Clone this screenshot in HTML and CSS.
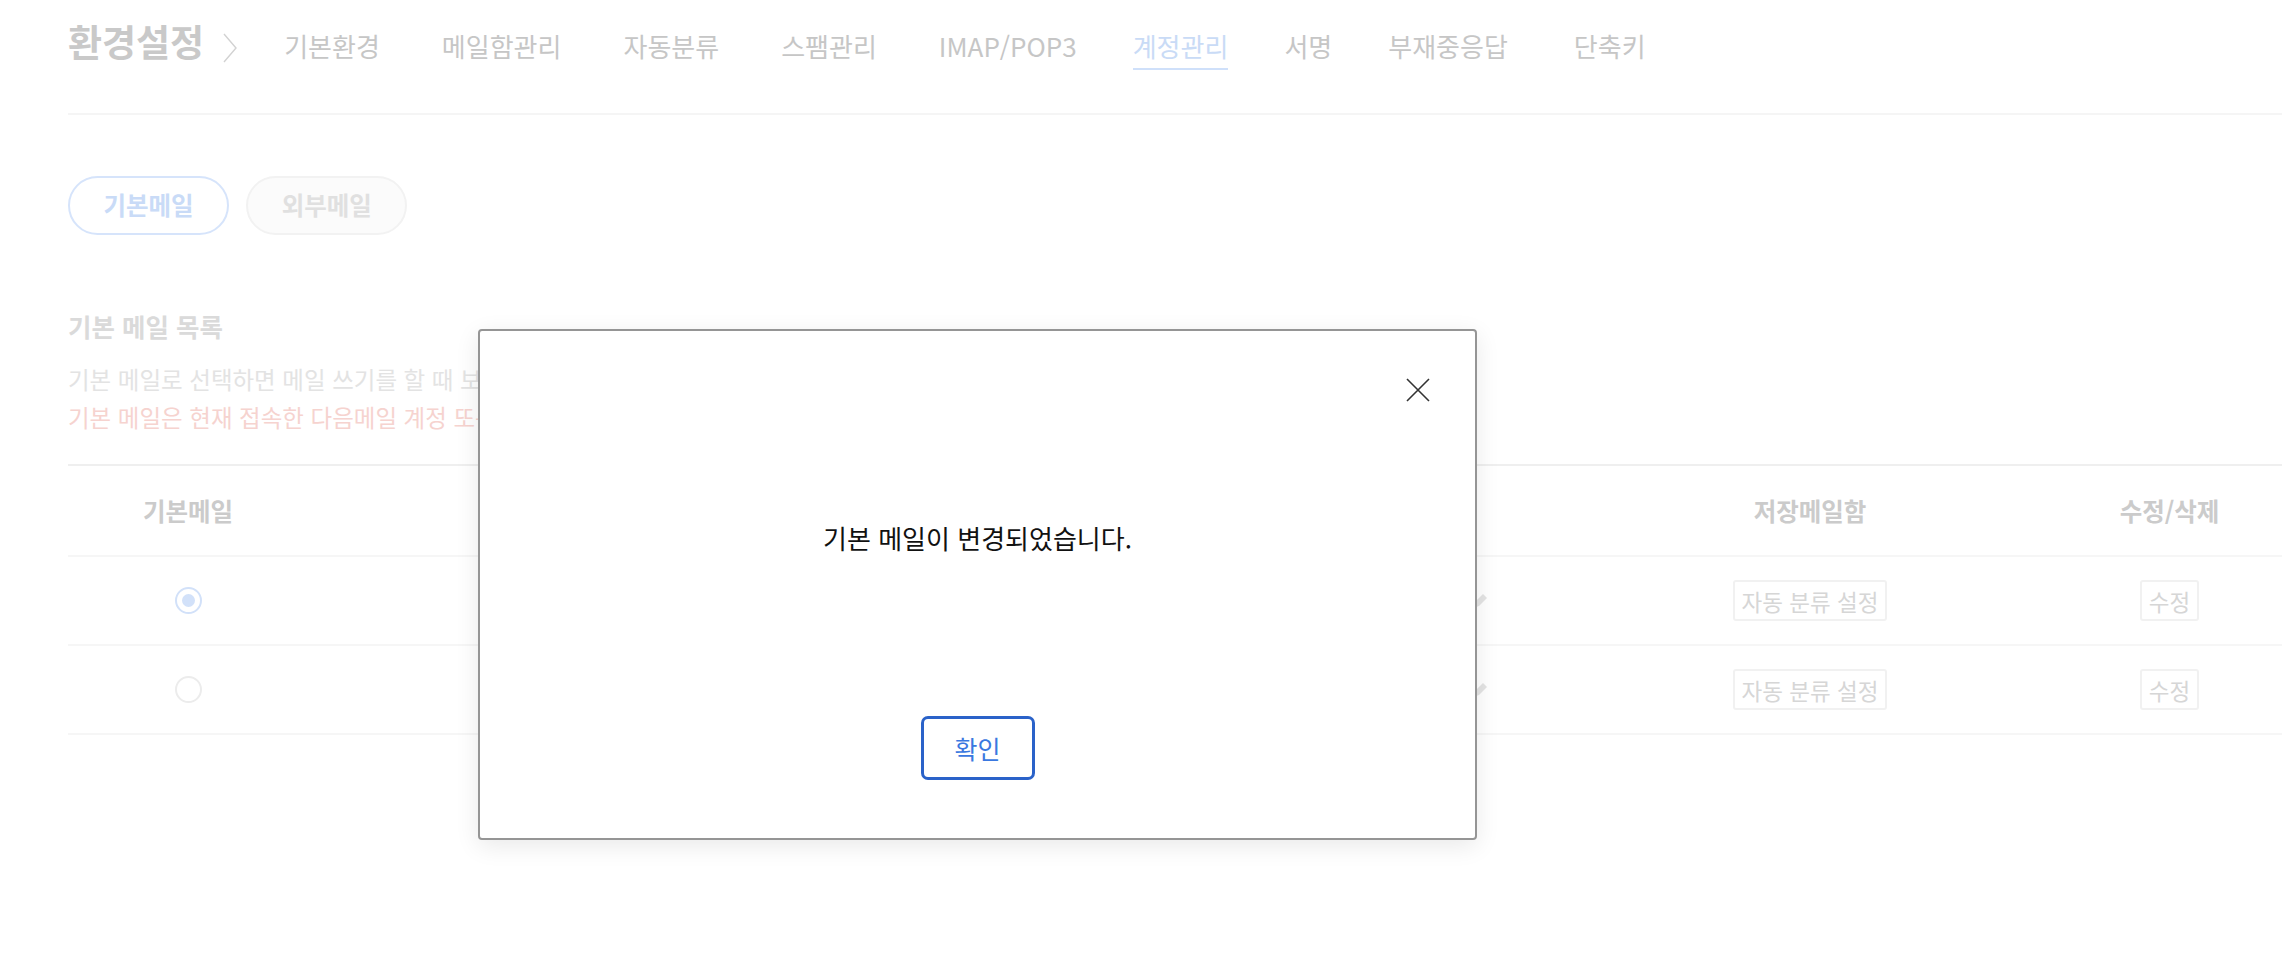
FILE: index.html
```html
<!DOCTYPE html>
<html lang="ko">
<head>
<meta charset="utf-8">
<title>환경설정 - 계정관리</title>
<link rel="stylesheet" href="styles.css">
</head>
<body>
<div class="page">
  <header class="header">
    <h1 class="title">환경설정</h1>
    <svg class="chev" width="14" height="30" viewBox="0 0 14 30"><polyline points="1,1 13,15 1,29" fill="none" stroke="#d2d2d2" stroke-width="1.4"/></svg>
    <nav class="nav">
      <a class="nav-item">기본환경</a>
      <a class="nav-item">메일함관리</a>
      <a class="nav-item">자동분류</a>
      <a class="nav-item">스팸관리</a>
      <a class="nav-item">IMAP/POP3</a>
      <a class="nav-item tight active">계정관리</a>
      <a class="nav-item tight">서명</a>
      <a class="nav-item tight">부재중응답</a>
      <a class="nav-item wide">단축키</a>
    </nav>
  </header>

  <div class="tabs">
    <span class="pill pill-on">기본메일</span>
    <span class="pill pill-off">외부메일</span>
  </div>

  <h2 class="sec-title">기본 메일 목록</h2>
  <p class="desc">기본 메일로 선택하면 메일 쓰기를 할 때 보내는 사람 주소로 설정됩니다.</p>
  <p class="desc warn">기본 메일은 현재 접속한 다음메일 계정 또는 연결된 계정 중에서 선택할 수 있습니다.</p>

  <div class="table">
    <div class="row head">
      <div class="cell">기본메일</div>
      <div class="cell"></div>
      <div class="cell">저장메일함</div>
      <div class="cell">수정/삭제</div>
    </div>
    <div class="row">
      <div class="cell"><span class="radio checked"></span></div>
      <div class="cell addr"><svg class="pen" width="20" height="20" viewBox="0 0 20 20"><path d="M3 17 L5 11 L13 3 L17 7 L9 15 Z" fill="#e4e4e4"/></svg></div>
      <div class="cell"><span class="btn">자동 분류 설정</span></div>
      <div class="cell"><span class="btn">수정</span></div>
    </div>
    <div class="row">
      <div class="cell"><span class="radio"></span></div>
      <div class="cell addr"><svg class="pen" width="20" height="20" viewBox="0 0 20 20"><path d="M3 17 L5 11 L13 3 L17 7 L9 15 Z" fill="#e4e4e4"/></svg></div>
      <div class="cell"><span class="btn">자동 분류 설정</span></div>
      <div class="cell"><span class="btn">수정</span></div>
    </div>
  </div>
</div>

<div class="modal" role="dialog">
  <button class="close" aria-label="닫기">
    <svg width="24" height="24" viewBox="0 0 24 24"><path d="M1 1 L23 23 M23 1 L1 23" stroke="#333" stroke-width="1.6" fill="none"/></svg>
  </button>
  <p class="msg">기본 메일이 변경되었습니다.</p>
  <button class="ok">확인</button>
</div>
</body>
</html>
```
FILE: styles.css
```css
html, body {
  margin: 0;
  padding: 0;
  background: #fff;
}
body {
  font-family: "Noto Sans CJK KR", "Noto Sans", sans-serif;
  width: 2282px;
  height: 958px;
  overflow: hidden;
  position: relative;
}
.page {
  padding-left: 68px;
}
.header {
  display: flex;
  align-items: baseline;
  box-sizing: border-box;
  height: 115px;
  padding-top: 23px;
  border-bottom: 2px solid #f5f5f5;
}
.title {
  margin: 0;
  font-size: 37px;
  line-height: 37px;
  font-weight: 700;
  color: #c9c9c9;
}
.chev {
  align-self: flex-start;
  margin-top: 10px;
  margin-left: 19px;
}
.nav {
  display: flex;
  align-items: baseline;
  gap: 62px;
  margin-left: 47px;
}
.nav-item {
  font-size: 26px;
  line-height: 26px;
  color: #c6c6c6;
  padding-bottom: 9px;
  border-bottom: 2px solid transparent;
}
.nav-item.tight {
  margin-left: -6px;
}
.nav-item.wide {
  margin-left: 4px;
}
.nav-item.active {
  color: #c9dbf6;
  border-bottom-color: #cfe0fa;
}
.tabs {
  display: flex;
  gap: 17px;
  margin-top: 61px;
}
.pill {
  box-sizing: border-box;
  height: 59px;
  display: inline-flex;
  align-items: center;
  padding: 0 33.5px;
  border-radius: 30px;
  font-size: 24.5px;
  font-weight: 700;
  line-height: 1;
}
.pill-on {
  border: 2px solid #d6e4fb;
  color: #c9dbf7;
}
.pill-off {
  border: 2px solid #f2f2f2;
  background: #fbfbfb;
  color: #e0e0e0;
}
.sec-title {
  margin: 77.5px 0 0;
  font-size: 25.5px;
  line-height: 25.5px;
  font-weight: 700;
  color: #dadada;
}
.desc {
  margin: 0;
  font-size: 23.5px;
  line-height: 38px;
  color: #e3e3e3;
}
.sec-title + .desc {
  margin-top: 21.5px;
}
.desc.warn {
  color: #f6d3cf;
}
.table {
  margin-top: 28.5px;
  border-top: 2px solid #efefef;
}
.row {
  display: grid;
  grid-template-columns: 240px 1fr 494px 225px;
  height: 87px;
  border-bottom: 2px solid #f6f6f6;
}
.row.head {
  height: 89px;
  font-size: 24.5px;
  font-weight: 700;
  color: #cbcbcb;
}
.cell {
  display: flex;
  align-items: center;
  justify-content: center;
}
.cell.addr {
  justify-content: flex-end;
  padding-right: 73px;
}
.radio {
  box-sizing: border-box;
  width: 27px;
  height: 27px;
  border-radius: 50%;
  border: 2px solid #ececec;
  display: flex;
  align-items: center;
  justify-content: center;
}
.radio.checked {
  border-color: #d2e1f9;
}
.radio.checked::after {
  content: "";
  width: 13px;
  height: 13px;
  border-radius: 50%;
  background: #d2e1f9;
}
.btn {
  box-sizing: border-box;
  height: 41px;
  display: inline-flex;
  align-items: center;
  padding: 0 7px;
  border: 2px solid #f1f1f1;
  border-radius: 3px;
  font-size: 22.5px;
  color: #d6d6d6;
}
.modal {
  position: absolute;
  left: 478px;
  top: 329px;
  box-sizing: border-box;
  width: 999px;
  height: 511px;
  background: #fff;
  border: 2px solid #959595;
  border-radius: 4px;
  box-shadow: 0 6px 24px rgba(0, 0, 0, 0.09);
  display: flex;
  flex-direction: column;
  align-items: center;
  padding-top: 193.5px;
}
.close {
  position: absolute;
  top: 47px;
  right: 45px;
  width: 24px;
  height: 24px;
  padding: 0;
  border: 0;
  background: none;
  display: block;
}
.close svg {
  display: block;
}
.msg {
  margin: 0;
  font-size: 26px;
  line-height: 26px;
  color: #111;
}
.ok {
  margin-top: 165.5px;
  box-sizing: border-box;
  width: 114px;
  height: 64px;
  border: 3px solid #2a62c9;
  border-radius: 7px;
  background: #fff;
  font-family: "Noto Sans CJK KR", "Noto Sans", sans-serif;
  font-size: 25px;
  color: #3a78e0;
  padding: 0;
}
```
